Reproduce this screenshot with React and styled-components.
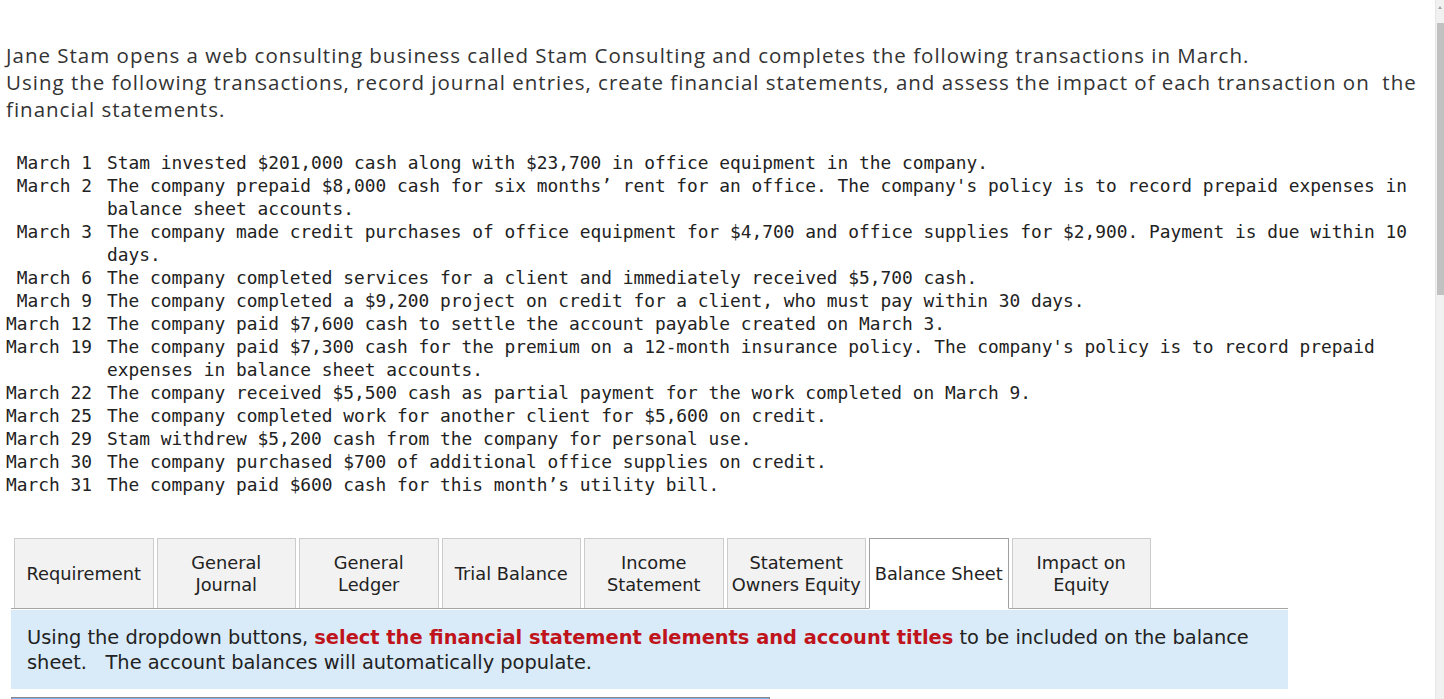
import React from "react";
import styled, { createGlobalStyle } from "styled-components";

const GlobalStyle = createGlobalStyle`
  html, body {
    margin: 0;
    padding: 0;
    background: #fff;
    overflow: hidden;
  }
`;

const transactions = [
  ["March 1", "Stam invested $201,000 cash along with $23,700 in office equipment in the company."],
  ["March 2", "The company prepaid $8,000 cash for six months\u2019 rent for an office. The company's policy is to record prepaid expenses in balance sheet accounts."],
  ["March 3", "The company made credit purchases of office equipment for $4,700 and office supplies for $2,900. Payment is due within 10 days."],
  ["March 6", "The company completed services for a client and immediately received $5,700 cash."],
  ["March 9", "The company completed a $9,200 project on credit for a client, who must pay within 30 days."],
  ["March 12", "The company paid $7,600 cash to settle the account payable created on March 3."],
  ["March 19", "The company paid $7,300 cash for the premium on a 12-month insurance policy. The company's policy is to record prepaid expenses in balance sheet accounts."],
  ["March 22", "The company received $5,500 cash as partial payment for the work completed on March 9."],
  ["March 25", "The company completed work for another client for $5,600 on credit."],
  ["March 29", "Stam withdrew $5,200 cash from the company for personal use."],
  ["March 30", "The company purchased $700 of additional office supplies on credit."],
  ["March 31", "The company paid $600 cash for this month\u2019s utility bill."],
];

const tabs = [
  "Requirement",
  "General Journal",
  "General Ledger",
  "Trial Balance",
  "Income Statement",
  "Statement Owners Equity",
  "Balance Sheet",
  "Impact on Equity",
];

export default function App() {
  return (
    <Page>
      <GlobalStyle />
      <Intro>
        Jane Stam opens a web consulting business called Stam Consulting and completes the following transactions in March.
        <br />
        Using the following transactions, record journal entries, create financial statements, and assess the impact of each transaction on&nbsp; the financial statements.
      </Intro>

      <Transactions>
        {transactions.map(([date, text]) => (
          <React.Fragment key={date}>
            <DateCell>{date}</DateCell>
            <DescCell>{text}</DescCell>
          </React.Fragment>
        ))}
      </Transactions>

      <TabBar>
        {tabs.map((t) => (
          <Tab key={t} $active={t === "Balance Sheet"}>
            {t}
          </Tab>
        ))}
      </TabBar>

      <Instructions>
        Using the dropdown buttons, <Red>select the financial statement elements and account titles</Red> to be included on the balance sheet.&nbsp;&nbsp; The account balances will automatically populate.
      </Instructions>

      <SheetTop />

      <ScrollTrack>
        <ScrollArrow />
        <ScrollThumb />
      </ScrollTrack>
    </Page>
  );
}

const Page = styled.div`
  padding: 42px 0 0 0;
  height: 699px;
  box-sizing: border-box;
  overflow: hidden;
`;

const Intro = styled.p`
  margin: 0 0 0 6px;
  width: 1428px;
  font-family: "Open Sans", "Lato", sans-serif;
  font-size: 20.5px;
  letter-spacing: 1px;
  line-height: 27px;
  color: #333;
`;

const Transactions = styled.div`
  display: grid;
  grid-template-columns: 87px 1330px;
  column-gap: 15px;
  margin: 28px 0 0 5px;
  font-family: "DejaVu Sans Mono", "Liberation Mono", monospace;
  font-size: 17.85px;
  line-height: 23px;
  color: #222;
`;

const DateCell = styled.div`
  text-align: right;
  white-space: nowrap;
`;

const DescCell = styled.div``;

const TabBar = styled.div`
  display: flex;
  align-items: flex-end;
  gap: 3px;
  width: 1277px;
  margin: 42px 0 0 11px;
  padding-left: 3px;
  box-sizing: border-box;
  border-bottom: 1px solid #a6a6a6;
`;

const Tab = styled.div`
  width: 139.5px;
  box-sizing: border-box;
  display: flex;
  align-items: center;
  justify-content: center;
  text-align: center;
  padding: 0 2px;
  font-family: "DejaVu Sans", Verdana, sans-serif;
  font-size: 17.8px;
  line-height: 22px;
  color: #222;
  background: ${(p) => (p.$active ? "#fff" : "#f2f2f2")};
  border: 1px solid ${(p) => (p.$active ? "#a0a0a0" : "#cccccc")};
  border-bottom: ${(p) => (p.$active ? "1px solid #fff" : "none")};
  margin-bottom: ${(p) => (p.$active ? "-1px" : "0")};
  height: ${(p) => (p.$active ? "71px" : "70px")};
`;

const Instructions = styled.div`
  width: 1277px;
  margin: 1px 0 0 11px;
  box-sizing: border-box;
  padding: 15px 16px 14px 16px;
  background: #d9ebf9;
  font-family: "DejaVu Sans", Verdana, sans-serif;
  font-size: 19.4px;
  line-height: 25px;
  color: #222;
`;

const Red = styled.span`
  color: #c0141c;
  font-weight: bold;
`;

const SheetTop = styled.div`
  width: 759px;
  height: 20px;
  margin: 8px 0 0 11px;
  box-sizing: border-box;
  border: 1px solid #8a8a8a;
  background: #7aaee6;
`;

const ScrollTrack = styled.div`
  position: fixed;
  top: 0;
  right: 0;
  width: 8px;
  height: 699px;
  background: #f1f1f1;
  border-left: 1px solid #e6e6e6;
  z-index: 10;
`;

const ScrollArrow = styled.div`
  position: absolute;
  top: 6px;
  left: 2px;
  width: 0;
  height: 0;
  border-left: 2px solid transparent;
  border-right: 2px solid transparent;
  border-bottom: 3px solid #a3a3a3;
`;

const ScrollThumb = styled.div`
  position: absolute;
  top: 23px;
  left: 1px;
  right: 0;
  height: 272px;
  background: #c1c1c1;
`;
